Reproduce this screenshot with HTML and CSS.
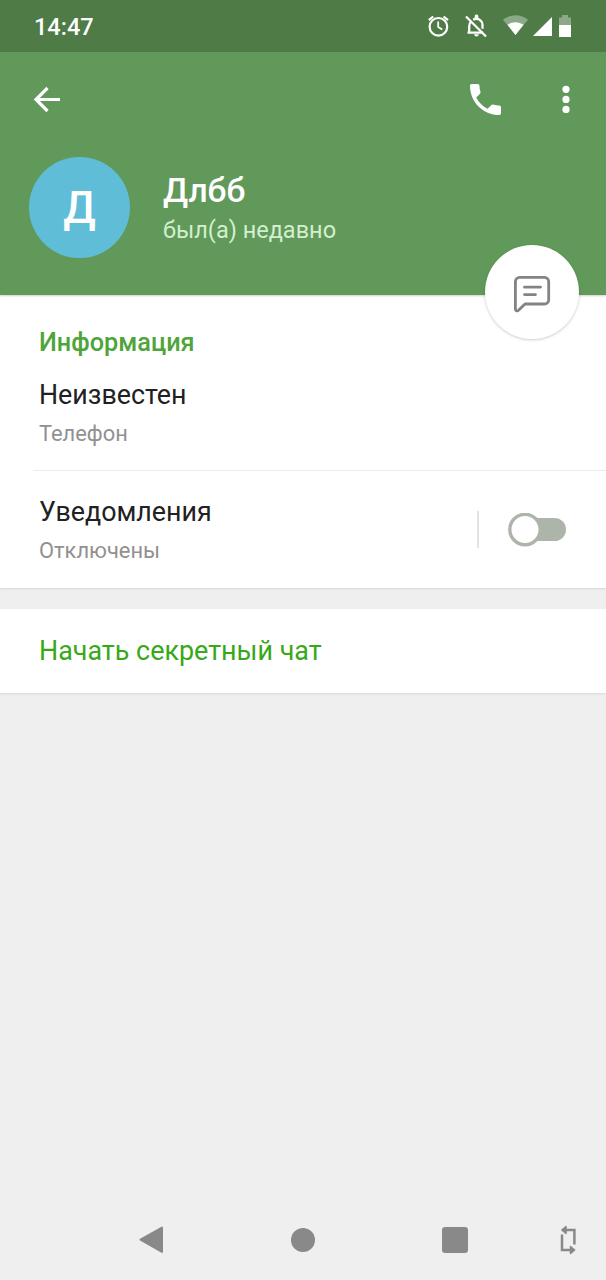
FILE: index.html
```
<!DOCTYPE html>
<html lang="ru">
<head>
    <meta charset="UTF-8">
    <title>Длбб</title>
    <link rel="stylesheet" href="styles.css">
</head>
<body>
    <div id="status-bar">
        <span class="clock">14:47</span>
        <svg width="148" height="28" viewBox="0 0 148 28" fill="none">
            <!-- alarm -->
            <g stroke="#fff" stroke-width="2.2">
                <circle cx="14.4" cy="14.8" r="8.8"/>
                <path d="M14.2 9.5v5.6l4 2.5" stroke-width="1.8"/>
                <path d="M4.8 8.2L9.2 4.5M19.6 4.5L24 8.2"/>
            </g>
            <!-- bell off -->
            <path d="M47 9.5c-1.3 1.3-1.8 3-1.8 5v6.2h14M43.5 20.7h2M49.2 7.8c4.3-2.8 9.3.5 9.3 5.7v3.2" stroke="#fff" stroke-width="2.3"/>
            <path d="M50.7 4.2c0-2.300 3.600-2.300 3.600 0v3h-3.600zM50.2 22.3h4.6c0 3-4.6 3-4.6 0z" fill="#fff"/>
            <path d="M42 4.5L62 24.5" stroke="#fff" stroke-width="2.3"/>
            <!-- wifi -->
            <path d="M79 7.7c7.5-6 17.5-6 25 0L91.5 23z" fill="#fff" fill-opacity=".35"/>
            <path d="M83.5 12.8c5-3.5 11-3.5 16 0L91.5 23z" fill="#fff"/>
            <!-- signal -->
            <path d="M109 24L128 5v19z" fill="#fff"/>
            <!-- battery -->
            <path d="M135 13V5.6h3V3h6v2.6h3V13z" fill="#fff" fill-opacity=".35"/>
            <path d="M135 13h12v12h-12z" fill="#fff"/>
        </svg>
    </div>

    <div id="header">
        <div class="toolbar">
            <svg width="28" height="28" viewBox="0 0 28 28" fill="none" stroke="#fff" stroke-width="3.2">
                <path d="M27 14.5H3M14.500 3L3 14.500l11.500 11.500"/>
            </svg>
            <div class="actions">
                <svg width="31" height="31" viewBox="3 3 18 18" fill="#fff">
                    <path d="M6.62 10.79c1.44 2.83 3.76 5.14 6.59 6.59l2.2-2.2c.27-.27.67-.36 1.02-.24 1.12.37 2.33.57 3.57.57.55 0 1 .45 1 1V20c0 .55-.45 1-1 1-9.39 0-17-7.61-17-17 0-.55.45-1 1-1h3.5c.55 0 1 .45 1 1 0 1.25.2 2.45.57 3.57.11.35.03.74-.25 1.02l-2.2 2.2z"/>
                </svg>
                <svg width="8" height="28" viewBox="0 0 8 28" fill="#fff">
                    <circle cx="4" cy="4.3" r="3.6"/>
                    <circle cx="4" cy="14.4" r="3.6"/>
                    <circle cx="4" cy="24.4" r="3.6"/>
                </svg>
            </div>
        </div>
        <div class="profile">
            <div class="avatar">Д</div>
            <div>
                <div class="name">Длбб</div>
                <div class="last-seen">был(а) недавно</div>
            </div>
        </div>
        <div class="message-button">
            <svg width="38" height="38" viewBox="0 0 38 38" fill="none" stroke="#838383" stroke-width="2.8" stroke-linecap="round" stroke-linejoin="round">
                <path d="M6.6 2.4h24.900a4.200 4.200 0 0 1 4.200 4.200v18.200a4.200 4.200 0 0 1-4.200 4.200H12l-6.500 6.300c-1.300 1.200-3.100.7-3.100-1.200V6.600a4.200 4.200 0 0 1 4.200-4.200z"/>
                <path d="M11.5 12.200h16M11.5 19.600h11"/>
            </svg>
        </div>
    </div>

    <div class="card">
        <div class="section-title">Информация</div>
        <div class="row">
            <div>
                <div class="row-title">Неизвестен</div>
                <div class="row-sub">Телефон</div>
            </div>
        </div>
        <div class="row">
            <div>
                <div class="row-title">Уведомления</div>
                <div class="row-sub">Отключены</div>
            </div>
            <div class="switch-box">
                <svg width="58" height="34" viewBox="0 0 58 34">
                    <rect x="6" y="5" width="52" height="23" rx="11.5" fill="#adb5ab"/>
                    <circle cx="17" cy="16.5" r="15.2" fill="#fff" stroke="#adb5ab" stroke-width="3.4"/>
                </svg>
            </div>
        </div>
    </div>

    <div class="card secret-chat">Начать секретный чат</div>

    <div id="nav-bar">
        <svg width="26" height="28" viewBox="0 0 26 28" fill="#898989" stroke="#898989" stroke-width="2" stroke-linejoin="round">
            <path d="M2.500 13.600L24 1.500v24.400z"/>
        </svg>
        <svg width="24" height="24" viewBox="0 0 24 24" fill="#898989">
            <circle cx="12" cy="12" r="12"/>
        </svg>
        <svg width="26" height="26" viewBox="0 0 26 26" fill="#898989">
            <rect width="26" height="26" rx="3"/>
        </svg>
        <svg width="18" height="30" viewBox="0 0 18 30" fill="none" stroke="#898989" stroke-width="2.5">
            <path d="M5 5h10.400v14.500M13 25H3V9.500"/>
            <path d="M7 1.500L2.800 5 7 8.500zM11.500 21.500l4.200 3.500-4.200 3.500z" fill="#898989" stroke-width="1.500" stroke-linejoin="round"/>
        </svg>
    </div>
</body>
</html>
```
FILE: styles.css
```
* {
    box-sizing: border-box;
}

body {
    font-family: Roboto, "Noto Sans", sans-serif;
    margin: 0;
    min-height: 1280px;
    display: flex;
    flex-direction: column;
    background-color: #efefef;
    color: #212121;
}

svg {
    display: block;
}

#status-bar {
    height: 52px;
    padding: 0 34px;
    display: flex;
    align-items: center;
    justify-content: space-between;
    background-color: #4f7b47;
    color: #fff;
}

.clock {
    font-size: 23.5px;
    font-weight: 500;
    line-height: 28px;
    padding-top: 2px;
}

#header {
    position: relative;
    height: 243px;
    background-color: #61995a;
    color: #fff;
    box-shadow: 0 1px 2px rgba(0, 0, 0, 0.2);
}

.toolbar {
    height: 94px;
    padding: 0 36px 0 33px;
    display: flex;
    align-items: center;
    justify-content: space-between;
}

.actions {
    display: flex;
    align-items: center;
    gap: 61px;
}

.profile {
    display: flex;
    gap: 34px;
    padding: 11px 0 0 29px;
}

.avatar {
    width: 101px;
    height: 101px;
    border-radius: 50%;
    background-color: #60bdd7;
    font-size: 43.5px;
    font-weight: 500;
    line-height: 103px;
    text-align: center;
}

.name {
    font-size: 33.6px;
    font-weight: 500;
    line-height: 40px;
    margin: 14px 0 0 -1px;
}

.last-seen {
    font-size: 23.5px;
    line-height: 28px;
    margin: 5px 0 0 -1px;
    color: #d3efcf;
}

.message-button {
    position: absolute;
    right: 27px;
    bottom: -44px;
    width: 94px;
    height: 94px;
    padding-top: 3px;
    border-radius: 50%;
    background-color: #fff;
    display: flex;
    align-items: center;
    justify-content: center;
    box-shadow: 0 1px 3px rgba(0, 0, 0, 0.2);
}

.card {
    background-color: #fff;
    box-shadow: 0 1px 2px rgba(0, 0, 0, 0.1);
}

.section-title {
    height: 59px;
    padding: 36px 39px 0;
    font-size: 25.3px;
    font-weight: 500;
    line-height: 23px;
    color: #4fa43a;
}

.row {
    height: 117px;
    margin-left: 33px;
    padding: 24px 40px 0 6px;
    display: flex;
    justify-content: space-between;
    border-bottom: 1px solid #ebebeb;
}

.row:last-child {
    border-bottom: none;
}

.row-title {
    font-size: 26.8px;
    line-height: 34px;
}

.row-sub {
    font-size: 21.9px;
    line-height: 28px;
    margin-top: 8px;
    color: #919191;
}

.switch-box {
    height: 37px;
    margin-top: 16px;
    padding-left: 29px;
    display: flex;
    align-items: center;
    border-left: 2px solid #e3e3e3;
}

.secret-chat {
    height: 84px;
    margin-top: 21px;
    padding: 0 39px;
    font-size: 26.9px;
    line-height: 84px;
    color: #37a818;
}

#nav-bar {
    height: 81px;
    margin-top: auto;
    padding-left: 75px;
    display: grid;
    grid-template-columns: 151px 153px 151px 76px;
    align-items: center;
    justify-items: center;
}
```
